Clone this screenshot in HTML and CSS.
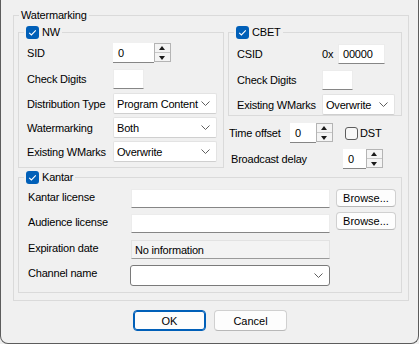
FILE: index.html
```html
<!DOCTYPE html>
<html>
<head>
<meta charset="utf-8">
<link rel="stylesheet" href="styles.css">
</head>
<body>
<div class="window">
  <fieldset class="grp outer">
    <legend class="lg-outer">Watermarking</legend>
    <div class="top">
      <fieldset class="grp nw">
        <legend class="lg-cb"><span class="cb on"><svg viewBox="0 0 13 13" width="13" height="13"><path d="M3.2 6.8 L5.4 9 L9.8 4.4" fill="none" stroke="#fff" stroke-width="1.1"/></svg></span>NW</legend>
        <div class="row h20 r1">
          <span class="lbl w86">SID</span>
          <div class="spin w58"><span class="val">0</span><span class="ud"><i class="up"></i><i class="dn"></i></span></div>
        </div>
        <div class="row h20 r2">
          <span class="lbl w86">Check Digits</span>
          <span class="edit w31"></span>
        </div>
        <div class="row h21 r3">
          <span class="lbl w86">Distribution Type</span>
          <div class="combo w104"><span class="ctext">Program Content</span><svg class="chev" viewBox="0 0 9 5" width="9" height="5"><path d="M0.5 0.5 L4.5 4.5 L8.5 0.5" fill="none" stroke="#5f5f5f" stroke-width="1"/></svg></div>
        </div>
        <div class="row h21 r4">
          <span class="lbl w86">Watermarking</span>
          <div class="combo w104"><span class="ctext">Both</span><svg class="chev" viewBox="0 0 9 5" width="9" height="5"><path d="M0.5 0.5 L4.5 4.5 L8.5 0.5" fill="none" stroke="#5f5f5f" stroke-width="1"/></svg></div>
        </div>
        <div class="row h21 r4">
          <span class="lbl w86">Existing WMarks</span>
          <div class="combo w104"><span class="ctext">Overwrite</span><svg class="chev" viewBox="0 0 9 5" width="9" height="5"><path d="M0.5 0.5 L4.5 4.5 L8.5 0.5" fill="none" stroke="#5f5f5f" stroke-width="1"/></svg></div>
        </div>
      </fieldset>
      <div class="rightcol">
        <fieldset class="grp cbet">
          <legend class="lg-cb"><span class="cb on"><svg viewBox="0 0 13 13" width="13" height="13"><path d="M3.2 6.8 L5.4 9 L9.8 4.4" fill="none" stroke="#fff" stroke-width="1.1"/></svg></span>CBET</legend>
          <div class="row h20 c1">
            <span class="lbl w85">CSID</span>
            <span class="hex">0x</span>
            <span class="edit w47"><span class="etext">00000</span></span>
          </div>
          <div class="row h20 r2">
            <span class="lbl w85">Check Digits</span>
            <span class="edit w31"></span>
          </div>
          <div class="row h21 r3">
            <span class="lbl w85">Existing WMarks</span>
            <div class="combo w73"><span class="ctext">Overwrite</span><svg class="chev" viewBox="0 0 9 5" width="9" height="5"><path d="M0.5 0.5 L4.5 4.5 L8.5 0.5" fill="none" stroke="#5f5f5f" stroke-width="1"/></svg></div>
          </div>
        </fieldset>
        <div class="row h20 trow">
          <span class="lbl w61">Time offset</span>
          <div class="spin w43"><span class="val">0</span><span class="ud"><i class="up"></i><i class="dn"></i></span></div>
          <span class="cb off dst"></span><span class="dsttext">DST</span>
        </div>
        <div class="row h20 brow">
          <span class="lbl w112">Broadcast delay</span>
          <div class="spin w40"><span class="val">0</span><span class="ud"><i class="up"></i><i class="dn"></i></span></div>
        </div>
      </div>
    </div>
    <fieldset class="grp kantar">
      <legend class="lg-k"><span class="cb on"><svg viewBox="0 0 13 13" width="13" height="13"><path d="M3.2 6.8 L5.4 9 L9.8 4.4" fill="none" stroke="#fff" stroke-width="1.1"/></svg></span>Kantar</legend>
      <div class="krow k1">
        <span class="klbl">Kantar license</span>
        <span class="edit kfield"></span>
        <button class="browse">Browse...</button>
      </div>
      <div class="krow k2">
        <span class="klbl">Audience license</span>
        <span class="edit kfield"></span>
        <button class="browse up2">Browse...</button>
      </div>
      <div class="krow k3">
        <span class="klbl">Expiration date</span>
        <span class="ro kfield">No information</span>
      </div>
      <div class="krow k4">
        <span class="klbl">Channel name</span>
        <div class="combo dark kcombo"><span class="ctext"></span><svg class="chev" viewBox="0 0 9 5" width="9" height="5"><path d="M0.5 0.5 L4.5 4.5 L8.5 0.5" fill="none" stroke="#5f5f5f" stroke-width="1"/></svg></div>
      </div>
    </fieldset>
  </fieldset>
  <div class="buttons">
    <button class="btn default">OK</button>
    <button class="btn">Cancel</button>
  </div>
</div>
</body>
</html>
```
FILE: styles.css
```css
html, body {
  margin: 0;
  padding: 0;
  background: #f0f0f0;
}
body {
  font-family: "Liberation Sans", Arial, sans-serif;
  font-size: 11px;
  letter-spacing: -0.2px;
  color: #000;
}
.window {
  width: 419px;
  height: 344px;
  box-sizing: border-box;
  border: 1px solid #5c5c5c;
  border-top: none;
  border-radius: 0 0 8px 8px;
  background: #f0f0f0;
  overflow: hidden;
}
.grp {
  margin: 0;
  border: 1px solid #dadada;
  box-sizing: border-box;
  min-inline-size: 0;
}
legend {
  height: 15px;
  line-height: 15px;
  display: flex;
  align-items: center;
  padding: 0 2px;
}
.outer {
  margin: 8px 0 0 12px;
  width: 396px;
  height: 293px;
  padding: 2px 0 0 4px;
}
.lg-outer {
  margin-left: 1px;
}
.top {
  display: flex;
  align-items: flex-start;
  height: 145px;
}
.nw {
  width: 206px;
  height: 143px;
  padding: 3px 0 0 8px;
}
.lg-cb {
  margin-left: -3px;
}
.lg-k {
  margin-left: -4px;
}
.cb {
  display: inline-block;
  width: 13px;
  height: 13px;
  box-sizing: border-box;
  border-radius: 3px;
  margin-right: 3px;
}
.cb svg { display: block; }
.cb.on {
  background: #005fb8;
}
.cb.off {
  border: 1px solid #5d5d5d;
  background: #f7f7f7;
}
.row {
  display: flex;
  align-items: center;
}
.h20 { height: 20px; }
.h21 { height: 21px; }
.r2 { margin-top: 6px; }
.r3 { margin-top: 4px; }
.r4 { margin-top: 3px; }
.c1 { margin-top: 1px; }
.lbl { flex: none; white-space: nowrap; }
.w86 { width: 86px; }
.w85 { width: 85px; }
.w61 { width: 61px; }
.w112 { width: 112px; }
.w31 { width: 31px; }
.w47 { width: 47px; }
.w58 { width: 58px; }
.w43 { width: 43px; }
.w40 { width: 40px; }
.w104 { width: 104px; }
.w73 { width: 73px; }
.edit {
  height: 100%;
  box-sizing: border-box;
  background: #fff;
  border: 1px solid #ececec;
  border-bottom: 1px solid #868686;
  display: flex;
  align-items: center;
}
.etext { padding-left: 4px; }
.hex { width: 16px; flex: none; }
.spin {
  height: 20px;
  display: flex;
  flex: none;
}
.spin .val {
  flex: 1;
  background: #fff;
  border-bottom: 1px solid #868686;
  padding-left: 5px;
  display: flex;
  align-items: center;
  box-sizing: border-box;
}
.spin .ud {
  width: 17px;
  height: 19px;
  box-sizing: border-box;
  border: 1px solid #b4b4b4;
  background: #f4f4f4;
  display: flex;
  flex-direction: column;
}
.spin .ud i {
  flex: 1;
  position: relative;
  display: block;
}
.spin .ud i.up { border-bottom: 1px solid #c8c8c8; }
.spin .ud i::after {
  content: "";
  position: absolute;
  left: 4px;
  width: 0;
  height: 0;
  border-left: 3.5px solid transparent;
  border-right: 3.5px solid transparent;
}
.spin .ud i.up::after {
  top: 2px;
  border-bottom: 4px solid #1a1a1a;
}
.spin .ud i.dn::after {
  top: 3px;
  border-top: 4px solid #1a1a1a;
}
.combo {
  height: 100%;
  box-sizing: border-box;
  background: #fff;
  border: 1px solid #e3e3e3;
  border-bottom-color: #cfcfcf;
  border-radius: 2px;
  display: flex;
  align-items: center;
  justify-content: space-between;
  padding: 0 6px 0 3px;
}
.combo.dark {
  border: 1px solid #7a7a7a;
  border-radius: 3px;
}
.chev { flex: none; display: block; }
.rightcol {
  margin-left: 4px;
  width: 174px;
}
.cbet {
  width: 174px;
  height: 91px;
  padding: 3px 0 0 8px;
}
.trow {
  margin-top: 7px;
  padding-left: 1px;
}
.dst {
  margin-left: 12px;
  margin-right: 2px;
}
.brow {
  margin-top: 6px;
  padding-left: 3px;
}
.kantar {
  margin-top: 0;
  width: 384px;
  height: 123px;
  padding: 4px 0 0 9px;
}
.krow {
  display: flex;
  align-items: flex-start;
  height: 19px;
}
.k2 { margin-top: 6px; }
.k3 { margin-top: 7px; }
.k4 { margin-top: 6px; height: 21px; }
.klbl {
  width: 103px;
  flex: none;
  line-height: 16px;
}
.kfield {
  width: 199px;
  height: 19px;
  flex: none;
}
.ro {
  box-sizing: border-box;
  background: #f3f3f3;
  border: 1px solid #e2e2e2;
  border-bottom: 1px solid #9a9a9a;
  display: flex;
  align-items: center;
  padding-left: 3px;
}
.kcombo {
  width: 200px;
  margin-left: -1px;
  flex: none;
}
.browse {
  margin: 0 0 0 6px;
  width: 60px;
  height: 18px;
  padding: 0;
  font: inherit;
  letter-spacing: 0;
  background: #fdfdfd;
  border: 1px solid #d0d0d0;
  border-bottom-color: #b8b8b8;
  border-radius: 4px;
  color: #000;
}
.browse.up2 { margin-top: -2px; }
.buttons {
  display: flex;
  justify-content: center;
  gap: 8px;
  margin-top: 9px;
  padding-left: 1px;
}
.btn {
  width: 73px;
  height: 21px;
  padding: 0;
  font: inherit;
  letter-spacing: 0;
  background: #fdfdfd;
  border: 1px solid #d0d0d0;
  border-bottom-color: #b8b8b8;
  border-radius: 4px;
  color: #000;
}
.btn.default {
  border: 1px solid #005fb8;
  box-shadow: inset 0 0 0 1px #005fb8;
}
```
